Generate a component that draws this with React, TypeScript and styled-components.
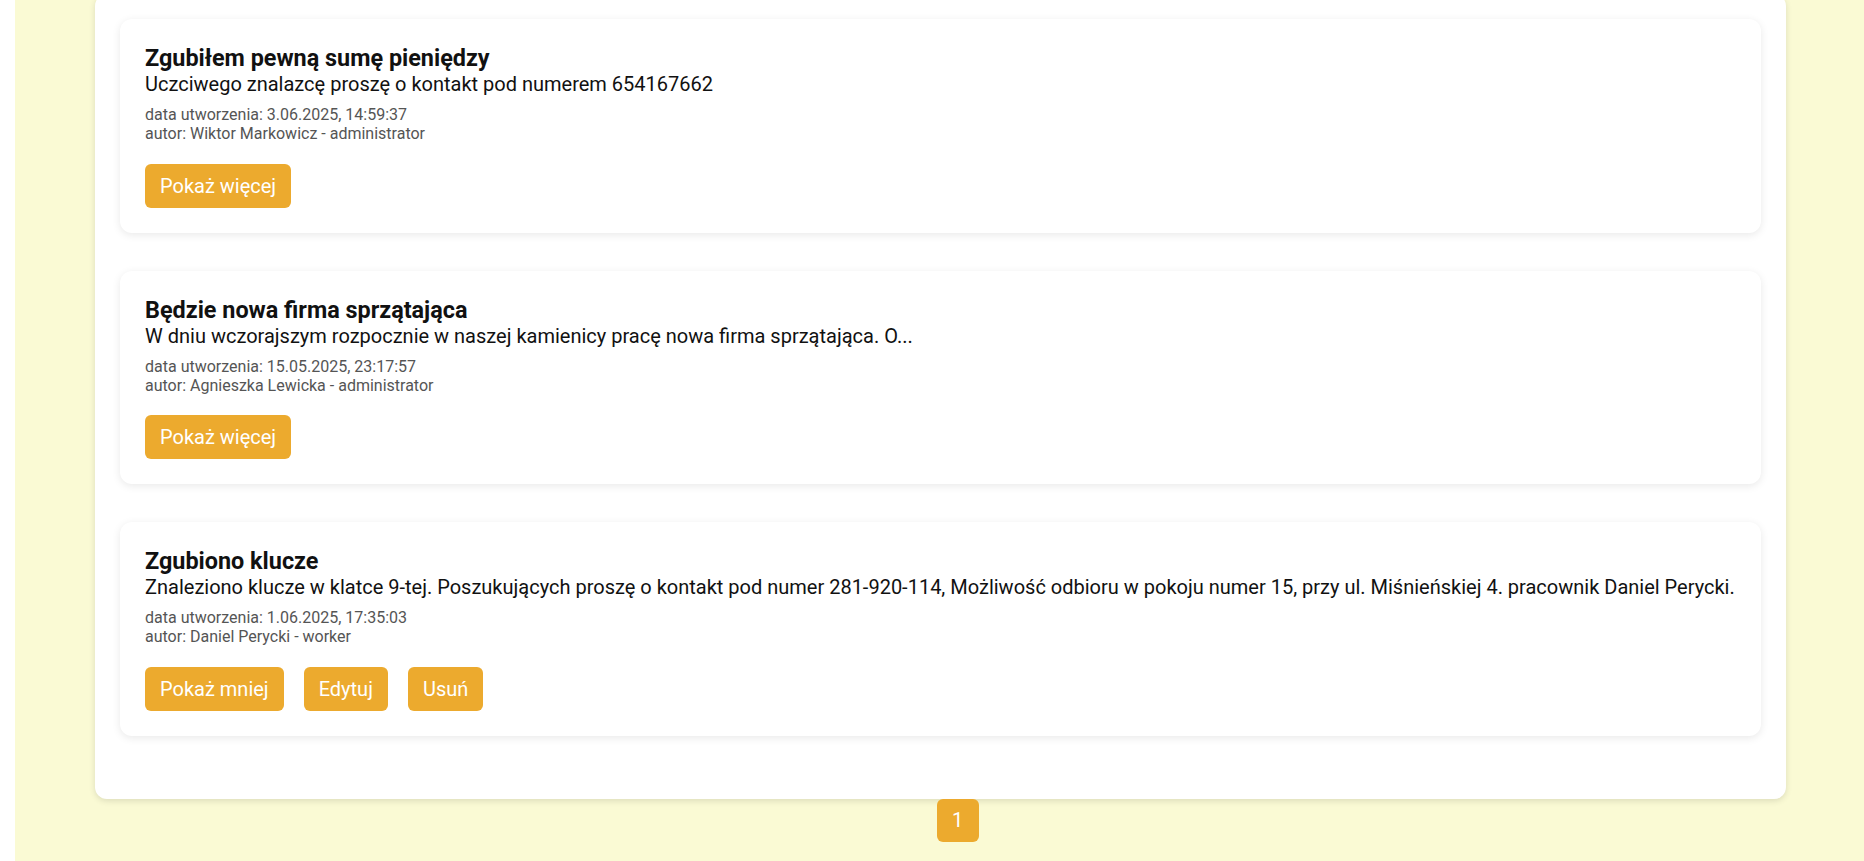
import React from "react";
import styled, { createGlobalStyle } from "styled-components";

const GlobalStyle = createGlobalStyle`
  html, body {
    margin: 0;
    padding: 0;
    background: #ffffff;
    font-family: Roboto, "Noto Sans", Arial, sans-serif;
    overflow: hidden;
  }
  * { box-sizing: border-box; }
`;

const Main = styled.main`
  margin-left: 15px;
  min-height: 100vh;
  background: #fafad4;
  padding-bottom: 40px;
`;

const Panel = styled.section`
  margin: -6px 78px 0 80px;
  padding: 25px;
  background: #ffffff;
  border-radius: 12px;
  box-shadow: 0 2px 6px rgba(0, 0, 0, 0.12);
`;

const Card = styled.article`
  background: #ffffff;
  border-radius: 12px;
  padding: 25px;
  margin-bottom: 38px;
  box-shadow: 0 2px 8px rgba(0, 0, 0, 0.09);
`;

const Title = styled.h3`
  margin: 0;
  font-size: 23.4px;
  font-weight: 700;
  color: #111111;
`;

const Body = styled.p`
  margin: 0;
  font-size: 20px;
  color: #111111;
`;

const Meta = styled.div`
  margin-top: 9px;
  font-size: 16px;
  color: #555555;
`;

const Actions = styled.div`
  display: flex;
  gap: 20px;
  margin-top: 20.5px;
`;

const Button = styled.button`
  height: 44px;
  padding: 0 15px;
  border: none;
  border-radius: 6px;
  background: #ecaa2e;
  color: #ffffff;
  font-family: Roboto, "Noto Sans", Arial, sans-serif;
  font-size: 20px;
  cursor: pointer;
`;

const Pagination = styled.nav`
  display: flex;
  justify-content: center;
  padding-left: 36px;
`;

const PageButton = styled.button`
  width: 42px;
  height: 43px;
  border: none;
  border-radius: 6px;
  background: #ecaa2e;
  color: #ffffff;
  font-family: Roboto, "Noto Sans", Arial, sans-serif;
  font-size: 20px;
`;

type Post = {
  title: string;
  body: string;
  date: string;
  author: string;
  actions: string[];
};

const posts: Post[] = [
  {
    title: "Zgubiłem pewną sumę pieniędzy",
    body: "Uczciwego znalazcę proszę o kontakt pod numerem 654167662",
    date: "3.06.2025, 14:59:37",
    author: "Wiktor Markowicz - administrator",
    actions: ["Pokaż więcej"],
  },
  {
    title: "Będzie nowa firma sprzątająca",
    body: "W dniu wczorajszym rozpocznie w naszej kamienicy pracę nowa firma sprzątająca. O...",
    date: "15.05.2025, 23:17:57",
    author: "Agnieszka Lewicka - administrator",
    actions: ["Pokaż więcej"],
  },
  {
    title: "Zgubiono klucze",
    body: "Znaleziono klucze w klatce 9-tej. Poszukujących proszę o kontakt pod numer 281-920-114, Możliwość odbioru w pokoju numer 15, przy ul. Miśnieńskiej 4. pracownik Daniel Perycki.",
    date: "1.06.2025, 17:35:03",
    author: "Daniel Perycki - worker",
    actions: ["Pokaż mniej", "Edytuj", "Usuń"],
  },
];

export default function App() {
  return (
    <>
      <GlobalStyle />
      <Main>
        <Panel>
          {posts.map((p) => (
            <Card key={p.title}>
              <Title>{p.title}</Title>
              <Body>{p.body}</Body>
              <Meta>
                <div>data utworzenia: {p.date}</div>
                <div>autor: {p.author}</div>
              </Meta>
              <Actions>
                {p.actions.map((a) => (
                  <Button key={a}>{a}</Button>
                ))}
              </Actions>
            </Card>
          ))}
        </Panel>
        <Pagination>
          <PageButton>1</PageButton>
        </Pagination>
      </Main>
    </>
  );
}
